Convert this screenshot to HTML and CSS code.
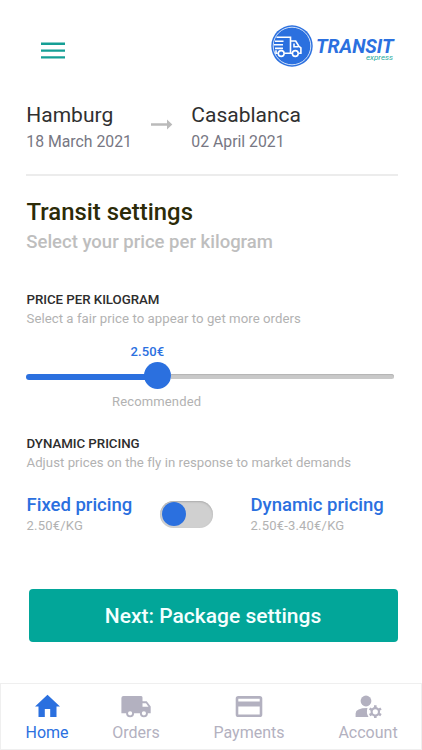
FILE: index.html
```html
<!DOCTYPE html>
<html lang="en">
<head>
<meta charset="utf-8">
<title>Transit express</title>
<link rel="stylesheet" href="styles.css">
</head>
<body>
<header class="header">
  <svg class="menu" viewBox="0 0 24 18"><path d="M0 1.7h24M0 8.6h24M0 15.4h24" stroke="#159f95" stroke-width="2.4"/></svg>
  <div class="brand">
    <svg class="brand-mark" viewBox="0 0 42 42" fill="none" stroke="#fff">
      <circle cx="21" cy="21" r="20.7" fill="#2b70df" stroke="none"/>
      <circle cx="21" cy="21" r="18.8" stroke-width=".8"/>
      <path d="M5.500 12.200h14v16H13.300M6.800 28.200H5v-3M4 16.200h8.500M3 19.800h9M4 23.400h8M19.500 16h5.200l3 5 2.200 1.800v5.400h-2.300M21 28.200h-1.500M23 18.500v3.300h4.500" stroke-width="1.600"/>
      <circle cx="10.200" cy="28.500" r="2.900" stroke-width="1.600"/>
      <circle cx="24.300" cy="28.500" r="2.900" stroke-width="1.600"/>
    </svg>
    <div class="brand-words"><div class="brand-name">TRANSIT</div><div class="brand-sub">express</div></div>
  </div>
</header>
<main class="content">
  <section class="route">
    <div class="stop from"><div class="city">Hamburg</div><div class="date">18 March 2021</div></div>
    <svg class="arrow" viewBox="0 0 22 12"><path d="M0 4.3h16V.5L21.300 5.500l-5.300 5V6.700H0z" fill="#bababa"/></svg>
    <div class="stop to"><div class="city">Casablanca</div><div class="date">02 April 2021</div></div>
  </section>
  <h1 class="title">Transit settings</h1>
  <p class="subtitle">Select your price per kilogram</p>
  <section class="price">
    <h2 class="label price-label">PRICE PER KILOGRAM</h2>
    <p class="hint price-hint">Select a fair price to appear to get more orders</p>
    <div class="value">2.50€</div>
    <div class="slider"><div class="fill"></div><div class="knob"></div><div class="rest"></div></div>
    <div class="recommended">Recommended</div>
  </section>
  <section class="dynamic">
    <h2 class="label dynamic-label">DYNAMIC PRICING</h2>
    <p class="hint dynamic-hint">Adjust prices on the fly in response to market demands</p>
    <div class="options">
      <div class="option"><div class="name fixed-name">Fixed pricing</div><div class="rate">2.50€/KG</div></div>
      <div class="toggle"><div class="toggle-knob"></div></div>
      <div class="option"><div class="name dynamic-name">Dynamic pricing</div><div class="rate">2.50€-3.40€/KG</div></div>
    </div>
  </section>
  <button class="next">Next: Package settings</button>
</main>
<nav class="nav">
  <div class="tab home active">
    <svg viewBox="0 0 30 24"><path d="M15.500 .8 28 12.5H24.500V23h-6.3v-8h-5.4v8H6.500V12.5H3z" fill="currentColor"/></svg>
    <span>Home</span>
  </div>
  <div class="tab orders">
    <svg viewBox="0 0 30 24"><path fill="currentColor" fill-rule="evenodd" d="M2.5 2h17.700q1.300 0 1.300 1.500V7.200h4.200l4 5.200v6.900h-2.800a4 4 0 0 1-8 0h-5.800a4 4 0 0 1-8 0H.4V4Q.4 2 2.500 2zM21.500 9.200v3.500h6l-2.500-3.500zM9.100 17.200a2.100 2.100 0 1 0 0 4.200a2.100 2.100 0 0 0 0-4.200M22.900 17.200a2.100 2.100 0 1 0 0 4.200a2.100 2.100 0 0 0 0-4.200"/></svg>
    <span>Orders</span>
  </div>
  <div class="tab payments">
    <svg viewBox="0 0 30 24"><path fill="currentColor" fill-rule="evenodd" d="M4.300 2h21.400q2.600 0 2.600 2.600v15.800q0 2.600-2.600 2.600H4.300q-2.600 0-2.600-2.600V4.600Q1.700 2 4.300 2zM4.300 4.700v2.800h21.400V4.700zM4.300 12.500v7.900h21.400v-7.900z"/></svg>
    <span>Payments</span>
  </div>
  <div class="tab account">
    <svg viewBox="0 0 30 24">
      <g fill="currentColor"><circle cx="13" cy="7" r="5.400"/><path d="M2.600 23v-3.500q0-5.500 11.900-5.500-1.600 4.500 1 9z"/></g>
      <g fill="none" stroke="currentColor"><circle cx="22.300" cy="17.800" r="3.700" stroke-width="2.200"/><path d="M22.300 13.800v-2.600M22.300 21.800v2.200M18.800 15.800l-2.200-1.300M25.800 15.800l2.200-1.300M18.800 19.800l-2.200 1.300M25.800 19.800l2.200 1.300" stroke-width="2.600"/></g>
    </svg>
    <span>Account</span>
  </div>
</nav>
</body>
</html>
```
FILE: styles.css
```css
* { box-sizing: border-box; }
body { margin: 0; width: 422px; height: 750px; overflow: hidden; background: #fff; font-family: Roboto, "Liberation Sans", sans-serif; display: flex; flex-direction: column; white-space: nowrap; }
h1, h2, p { margin: 0; }
svg { display: block; }

.header { height: 101px; padding: 25px 0 0 41px; display: flex; justify-content: space-between; align-items: flex-start; }
.menu { width: 24px; height: 18px; margin-top: 17px; }
.brand { display: flex; width: 151px; }
.brand-mark { width: 42px; height: 42px; flex: none; }
.brand-words { padding: 13px 0 0 3px; width: 84px; color: #2b70df; font-style: italic; }
.brand-name { font-size: 19.3px; font-weight: 700; line-height: 18px; }
.brand-sub { margin: -3px 0 0 50px; font-size: 8px; line-height: 9px; color: #26ab9e; }

.content { height: 582px; flex: none; padding: 0 24px 0 26px; }
.route { display: flex; height: 75px; border-bottom: 2px solid #ececec; width: 372px; }
.city { padding-left: .3px; font-size: 21px; line-height: 28px; color: #303030; }
.date { margin-top: 2px; padding-left: .3px; font-size: 15.8px; line-height: 22px; color: #777783; }
.from { width: 125px; }
.arrow { width: 22px; height: 12px; margin: 18px 18px 0 0; }
.title { margin-top: 21px; padding-left: .5px; font-size: 23.9px; font-weight: 500; line-height: 30px; color: #2c2b08; }
.subtitle { margin-top: 1px; padding-left: .3px; font-size: 18.5px; font-weight: 500; line-height: 28px; color: #bebebe; }

.price { margin-top: 34.5px; }
.label { padding-left: .5px; font-size: 13.3px; font-weight: 500; line-height: 18px; letter-spacing: -.05px; color: #2d2d2d; }
.hint { margin-top: 1px; padding-left: .5px; font-size: 13.2px; font-weight: 400; line-height: 18px; letter-spacing: .05px; color: #b2b2b2; }
.dynamic-hint { letter-spacing: .04px; }
.value { margin-top: 15.500px; padding-left: 104.5px; font-size: 13px; font-weight: 500; line-height: 18px; letter-spacing: .1px; color: #2b70df; }
.slider { height: 27px; margin-top: 1px; width: 368px; display: flex; align-items: center; }
.fill { width: 120px; height: 6px; margin-top: 2px; border-radius: 3px 0 0 3px; background: #2b70df; }
.knob { width: 27px; height: 27px; flex: none; margin-left: -2px; border-radius: 50%; background: #2b70df; }
.rest { flex: 1; height: 5px; margin-top: 2px; border-radius: 0 3px 3px 0; background: #c9c9c9; box-shadow: inset 0 1px 1px #b4b4b4; }
.recommended { margin-top: 4px; padding-left: 86px; font-size: 13px; font-weight: 400; line-height: 18px; letter-spacing: .15px; color: #b2b2b2; }

.dynamic { margin-top: 24px; }
.options { display: flex; margin-top: 20.5px; }
.name { padding-left: .5px; font-size: 18.5px; font-weight: 500; line-height: 24px; color: #2b70df; }
.rate { padding-left: .5px; font-size: 13px; font-weight: 400; line-height: 18px; letter-spacing: .2px; color: #b2b2b2; }
.option:first-child { width: 134px; }
.toggle { width: 53px; height: 27px; margin: 8px 37px 0 0; padding: 1.500px; border-radius: 14px; background: #d0d0d0; box-shadow: inset 0 1px 2px #aaa; }
.toggle-knob { width: 24px; height: 24px; border-radius: 50%; background: #2b70df; }
.next { display: block; width: 369px; height: 53px; margin: 54px 0 0 3px; padding: 1px 1px 0 0; border: 0; border-radius: 4px; background: #02a699; color: #f4ffff; font: 500 21px/52px Roboto, "Liberation Sans", sans-serif; }

.nav { height: 67px; border: 1px solid #efefef; display: flex; padding: 10px 16px 0 17px; }
.tab { display: flex; flex-direction: column; align-items: center; width: 58px; color: #b3b1c0; }
.tab svg { width: 30px; height: 24px; }
.tab span { margin-top: 5px; font-size: 16px; line-height: 20px; }
.active { color: #2b70df; }
.orders { margin-left: 31px; }
.payments { width: 72px; margin-left: 48px; }
.account { margin-left: 54px; }
```
